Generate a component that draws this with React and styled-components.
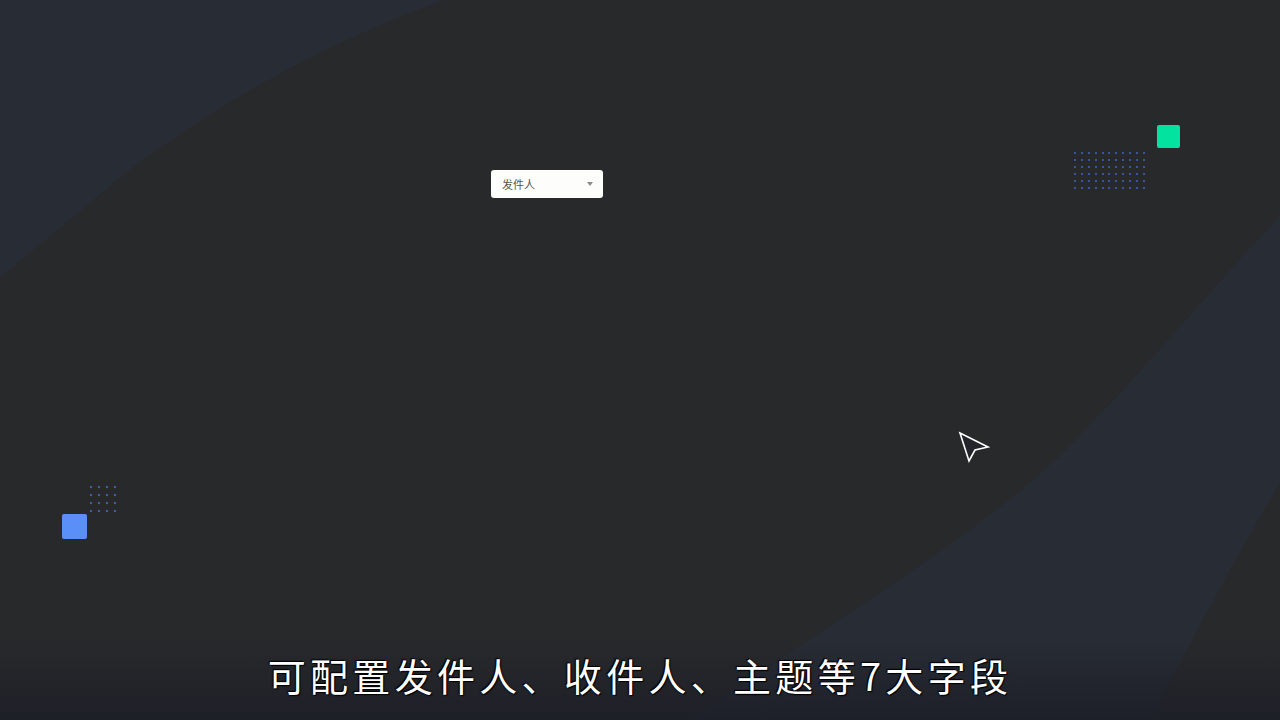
import styled, { createGlobalStyle } from "styled-components";

const Global = createGlobalStyle`
  html, body {
    margin: 0;
    padding: 0;
    background: #28292b;
  }
  * { box-sizing: border-box; }
`;

const Stage = styled.div`
  position: relative;
  width: 1280px;
  height: 720px;
  overflow: hidden;
  background: #28292b;
  font-family: "Noto Sans CJK SC", "Noto Sans", sans-serif;
`;

const Backdrop = styled.svg`
  position: absolute;
  inset: 0;
  width: 1280px;
  height: 720px;
`;

const Layer = styled.div`
  position: absolute;
  left: ${(p) => p.x}px;
  top: ${(p) => p.y}px;
`;

// green square sits above-right of its dot field
const TopCluster = styled.div`
  display: grid;
  grid-template-columns: 72px 11px 23px;
  grid-template-rows: 23px 4px auto;
  > :first-child { grid-column: 3; grid-row: 1; }
  > :last-child { grid-column: 1; grid-row: 3; }
`;

// blue square sits below-left of its dot field
const BottomCluster = styled.div`
  display: grid;
  grid-template-columns: 28px auto;
  grid-template-rows: 28px 25px;
  > :first-child { grid-column: 2; grid-row: 1; }
  > :last-child { grid-column: 1; grid-row: 2; }
`;

const Select = styled.div`
  width: 112px;
  height: 28px;
  background: #fdfdfb;
  border-radius: 3px;
  display: flex;
  align-items: center;
  justify-content: space-between;
  padding: 0 10px 0 11px;
  font-size: 11px;
  color: #555;
`;

const Caret = styled.span`
  width: 0;
  height: 0;
  border-left: 3.5px solid transparent;
  border-right: 3.5px solid transparent;
  border-top: 4px solid #8a8a8a;
`;

const Square = styled.div`
  width: ${(p) => p.size}px;
  height: ${(p) => p.size}px;
  background: ${(p) => p.color};
  border-radius: 2px;
`;

const Dots = styled.div`
  display: grid;
  grid-template-columns: repeat(${(p) => p.cols}, 2px);
  grid-auto-rows: 2px;
  column-gap: ${(p) => p.gap}px;
  row-gap: ${(p) => p.rowGap}px;
  span {
    background: ${(p) => p.color};
    border-radius: 1px;
  }
`;

const Subtitle = styled.div`
  position: absolute;
  left: 0;
  right: 0;
  bottom: 0;
  height: 80px;
  display: flex;
  justify-content: center;
  padding-top: 10px;
  background: linear-gradient(to bottom, rgba(34, 37, 42, 0) 0%, rgba(30, 33, 40, 0.7) 60%, rgba(28, 31, 38, 0.9) 100%);
  color: #fff;
  font-size: 38px;
  letter-spacing: 4.3px;
  line-height: 50px;
  font-weight: 400;
  text-shadow: 0 0 2px #000, 1px 1px 1px #000, -1px -1px 1px #000;
`;

function DotGrid({ cols, rows, gap, rowGap, color }) {
  return (
    <Dots cols={cols} gap={gap} rowGap={rowGap} color={color}>
      {Array.from({ length: cols * rows }, (_, i) => (
        <span key={i} />
      ))}
    </Dots>
  );
}

export default function App() {
  return (
    <Stage>
      <Global />
      <Backdrop viewBox="0 0 1280 720">
        <path
          d="M0 0 H445 C330 40 205 110 120 178 C75 215 35 250 0 277 Z"
          fill="#282c34"
        />
        <path
          d="M1280 216 C1200 300 1120 400 1040 474 C950 552 850 610 690 720 L1150 720 C1200 625 1240 550 1280 483 Z"
          fill="#282c35"
        />
      </Backdrop>

      <Layer x={491} y={170}>
        <Select>
          发件人
          <Caret />
        </Select>
      </Layer>

      <Layer x={1074} y={125}>
        <TopCluster>
          <Square size={23} color="#02e39f" />
          <DotGrid cols={11} rows={6} gap={4.9} rowGap={5} color="#4063cc" />
        </TopCluster>
      </Layer>

      <Layer x={62} y={486}>
        <BottomCluster>
          <DotGrid cols={4} rows={4} gap={6} rowGap={6} color="#4d72d8" />
          <Square size={25} color="#5b8ff8" />
        </BottomCluster>
      </Layer>

      <Layer x={955} y={429}>
        <svg width="40" height="40" viewBox="0 0 40 40">
          <path
            d="M5 4 L33 18 L20 21 L14 32 Z"
            fill="#23252a"
            stroke="#fff"
            strokeWidth="1.6"
            strokeLinejoin="miter"
          />
        </svg>
      </Layer>

      <Subtitle>可配置发件人、收件人、主题等7大字段</Subtitle>
    </Stage>
  );
}
